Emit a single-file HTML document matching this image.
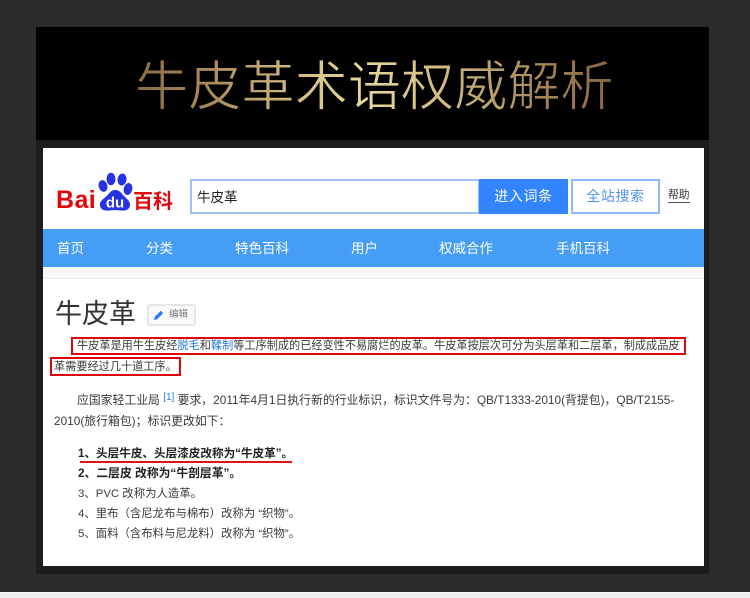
<!DOCTYPE html>
<html lang="zh">
<head>
<meta charset="utf-8">
<style>
html,body{margin:0;padding:0}
body{width:750px;height:598px;overflow:hidden;position:relative;background:#2b2b2b;font-family:"Liberation Sans","Noto Sans CJK SC",sans-serif}
div{position:absolute}
.t{white-space:nowrap;font-size:11.17px;line-height:20px;color:#3a3a3a;height:20px;filter:blur(.3px)}
.n{position:absolute;top:230px;height:38px;line-height:38px;color:#fff;font-size:13.5px;white-space:nowrap;filter:blur(.25px)}
.r{position:absolute;border:2px solid #e0040b;box-sizing:border-box}
</style>
</head>
<body>
<div style="left:0;top:592px;width:750px;height:6px;background:#eeeeee;border-top:1px solid #f8f8f8;box-sizing:border-box"></div>
<div style="left:36px;top:140px;width:673px;height:434px;background:#1d1d1d"></div>
<div style="left:36px;top:27px;width:673px;height:113px;background:#000"></div>
<svg style="position:absolute;left:130px;top:45px" width="490" height="80" viewBox="0 0 490 80">
<defs><linearGradient id="g" x1="0" x2="1" y1="0" y2="0"><stop offset="0" stop-color="#8a6a42"/><stop offset=".15" stop-color="#a98a5e"/><stop offset=".35" stop-color="#d5bf84"/><stop offset=".48" stop-color="#e6d99a"/><stop offset=".65" stop-color="#cfb980"/><stop offset=".85" stop-color="#a58659"/><stop offset="1" stop-color="#85663f"/></linearGradient></defs>
<text x="5" y="60" font-family="'Noto Sans CJK SC',sans-serif" font-size="53.2" fill="url(#g)" stroke="#000" stroke-width=".9">牛皮革术语权威解析</text>
</svg>

<div style="left:43px;top:148px;width:661px;height:418px;background:#fff"></div>

<!-- logo -->
<div style="left:56px;top:186px;font:bold 25px/28px 'Liberation Sans',sans-serif;color:#e1060d;letter-spacing:.4px;white-space:nowrap">Bai</div>
<svg style="position:absolute;left:98px;top:171px" width="38" height="44" viewBox="0 0 38 44">
<g fill="#2932e1">
<ellipse cx="5" cy="15" rx="4.300" ry="6" transform="rotate(-15 5 15)"/>
<ellipse cx="13" cy="8" rx="4.500" ry="6.200"/>
<ellipse cx="24" cy="8.500" rx="4.500" ry="6" transform="rotate(8 24 8.500)"/>
<ellipse cx="30" cy="18" rx="4.300" ry="6" transform="rotate(12 30 18)"/>
<path d="M17 19C12.500 19 11.500 23 7 26.500C3 29.500 1.500 32 2 35C2.800 39 7 40 11 39.500C14 39 20 39 23 39.500C28 40 31.500 38.500 32 34.500C32.400 30.500 29 28 26 25C23 22 22 19 17 19Z"/>
</g>
<text x="17" y="36.500" text-anchor="middle" font-family="'Liberation Sans',sans-serif" font-weight="bold" font-size="15" fill="#fff">du</text>
</svg>
<div style="left:133px;top:185px;font:bold 20px/30px 'Noto Sans CJK SC',sans-serif;color:#e1060d;white-space:nowrap">百科</div>

<!-- search -->
<div style="left:190px;top:179px;width:290px;height:35px;box-sizing:border-box;border:2px solid #9dc0f9;background:#fff"></div>
<div class="t" style="left:197px;top:188px;color:#222;font-size:13.5px">牛皮革</div>
<div style="left:479px;top:179px;width:89px;height:35px;background:#3385ff;color:#fff;font-size:14px;line-height:34px;text-align:center;letter-spacing:.6px;filter:blur(.2px)">进入词条</div>
<div style="left:571px;top:179px;width:89px;height:35px;box-sizing:border-box;border:2px solid #8fb9f9;background:#fff;color:#4f93f5;font-size:14px;line-height:31px;text-align:center;letter-spacing:.6px">全站搜索</div>
<div style="left:668px;top:189px;font-size:10.8px;line-height:13px;color:#333;border-bottom:1px solid #555;white-space:nowrap">帮助</div>

<!-- nav -->
<div style="left:43px;top:229px;width:661px;height:38px;background:#459df5"></div>
<div style="left:43px;top:267px;width:661px;height:12px;background:#f6f6f6;border-bottom:1px solid #eee;box-sizing:border-box"></div>
<span class="n" style="left:57px">首页</span>
<span class="n" style="left:146px">分类</span>
<span class="n" style="left:235px">特色百科</span>
<span class="n" style="left:351px">用户</span>
<span class="n" style="left:439px">权威合作</span>
<span class="n" style="left:556px">手机百科</span>

<!-- heading -->
<div style="left:55px;top:296px;font-size:27px;line-height:36px;color:#333;white-space:nowrap">牛皮革</div>
<div style="left:147px;top:304px;width:49px;height:22px;box-sizing:border-box;border:2px solid #e6e6e6;border-radius:3px;background:#fafafa"></div>
<svg style="position:absolute;left:153px;top:309px" width="12" height="12" viewBox="0 0 12 12"><path d="M1 11L1.800 7.800L7.800 1.800L10.200 4.200L4.200 10.200Z" fill="#2f7cf0"/></svg>
<div style="left:169px;top:308px;font-size:9.500px;line-height:14px;color:#777;white-space:nowrap;filter:blur(.3px)">编辑</div>

<!-- paragraph -->
<div class="t" style="left:77px;top:336px">牛皮革是用牛生皮经<span style="color:#1f7ad8">脱毛</span>和<span style="color:#1f7ad8">鞣制</span>等工序制成的已经变性不易腐烂的皮革。牛皮革按层次可分为头层革和二层革，制成成品皮</div>
<div class="t" style="left:54px;top:357px">革需要经过几十道工序。</div>
<div class="r" style="left:71px;top:337px;width:615px;height:18px"></div>
<div class="r" style="left:50px;top:357px;width:131px;height:19px"></div>

<div class="t" style="left:77px;top:390px;font-size:11.85px">应国家轻工业局 <span style="color:#2a7ad8;font-size:10px;position:relative;top:-4px">[1]</span> 要求，2011年4月1日执行新的行业标识，标识文件号为：QB/T1333-2010(背提包)，QB/T2155-</div>
<div class="t" style="left:54px;top:411px;font-size:11.85px">2010(旅行箱包)；标识更改如下：</div>

<!-- list -->
<div class="t" style="left:78px;top:444px;color:#222;font-weight:bold;font-size:11.6px">1、头层牛皮、头层漆皮改称为“牛皮革”。</div>
<div style="left:80px;top:461px;width:212px;height:2px;background:#d9141a"></div>
<div class="t" style="left:78px;top:463px;color:#222;font-weight:bold;font-size:11.8px">2、二层皮 改称为“牛剖层革”。</div>
<div class="t" style="left:78px;top:484px;font-size:11.4px">3、PVC 改称为人造革。</div>
<div class="t" style="left:78px;top:504px;font-size:11.4px">4、里布（含尼龙布与棉布）改称为 “织物”。</div>
<div class="t" style="left:78px;top:524px;font-size:11.4px">5、面料（含布料与尼龙料）改称为 “织物”。</div>
</body>
</html>
